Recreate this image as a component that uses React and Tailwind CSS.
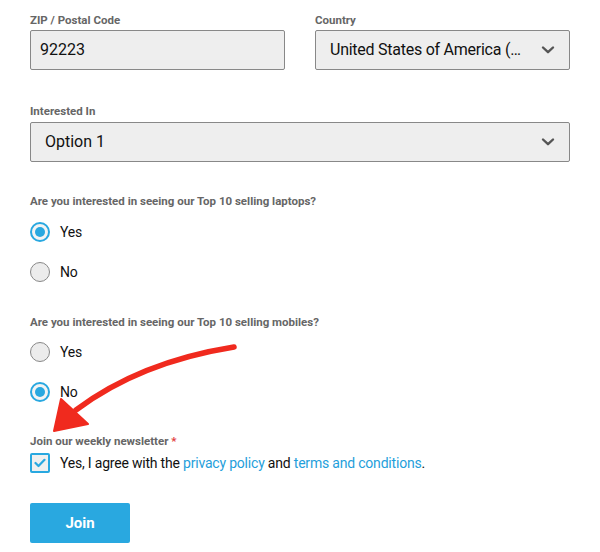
import React from "react";

function Chevron() {
  return (
    <svg width="14" height="10" viewBox="0 0 14 10" className="shrink-0">
      <path d="M2 2.5 L7 7.2 L12 2.5" fill="none" stroke="#555" strokeWidth="2.4" strokeLinecap="round" strokeLinejoin="round" />
    </svg>
  );
}

function Radio({ checked, label }) {
  return (
    <div className="flex items-center h-5">
      {checked ? (
        <span className="w-5 h-5 rounded-full border-2 border-[#29a8e0] bg-[#f4f4f4] flex items-center justify-center">
          <span className="w-[10px] h-[10px] rounded-full bg-[#29a8e0]" />
        </span>
      ) : (
        <span className="w-5 h-5 rounded-full border border-[#888] bg-[#ececec]" />
      )}
      <span className="ml-[10px] text-[14px] tracking-[-0.2px] text-[#111]">{label}</span>
    </div>
  );
}

export default function App() {
  return (
    <div className="relative w-[600px] h-[552px] bg-white overflow-hidden" style={{ fontFamily: "Roboto, 'Liberation Sans', sans-serif" }}>
      <div className="px-[30px] pt-[12px]">
        <div className="flex gap-[30px]">
          <div className="w-[255px]">
            <div className="text-[11.5px] leading-4 font-bold text-[#666]">ZIP / Postal Code</div>
            <div className="mt-[2px] h-10 bg-[#eee] border border-[#888] rounded-[2px] flex items-center pl-[9px] text-[16px] text-[#111]">92223</div>
          </div>
          <div className="w-[255px]">
            <div className="text-[11.5px] leading-4 font-bold text-[#666]">Country</div>
            <div className="mt-[2px] h-10 bg-[#eee] border border-[#888] rounded-[2px] flex items-center pl-[14px] pr-[14px] text-[16px] tracking-[-0.25px] text-[#111]">
              <span className="flex-1 whitespace-nowrap">United States of America (…</span>
              <Chevron />
            </div>
          </div>
        </div>

        <div className="mt-[33px] text-[11.5px] leading-4 font-bold text-[#666]">Interested In</div>
        <div className="mt-[3px] h-10 bg-[#eee] border border-[#888] rounded-[2px] flex items-center pl-[14px] pr-[14px] text-[16px] text-[#111]">
          <span className="flex-1">Option 1</span>
          <Chevron />
        </div>

        <div className="mt-[31px] text-[11.5px] leading-4 font-bold text-[#666]">Are you interested in seeing our Top 10 selling laptops?</div>
        <div className="mt-[13px]"><Radio checked label="Yes" /></div>
        <div className="mt-5"><Radio label="No" /></div>

        <div className="mt-8 text-[11.5px] leading-4 font-bold text-[#666]">Are you interested in seeing our Top 10 selling mobiles?</div>
        <div className="mt-3"><Radio label="Yes" /></div>
        <div className="mt-5"><Radio checked label="No" /></div>

        <div className="mt-[31px] text-[11.5px] leading-4 font-bold text-[#666]">Join our weekly newsletter <span className="text-[#e2403b]">*</span></div>
        <div className="mt-1 flex items-center h-5">
          <span className="w-5 h-5 rounded-[2px] border-2 border-[#29a8e0] bg-[#f0f0f0] flex items-center justify-center">
            <svg width="12" height="10" viewBox="0 0 12 10">
              <path d="M1.5 5 L4.5 8 L10.5 1.8" fill="none" stroke="#29a8e0" strokeWidth="2.2" strokeLinecap="round" strokeLinejoin="round" />
            </svg>
          </span>
          <span className="ml-[10px] text-[14px] tracking-[-0.2px] text-[#111]">
            Yes, I agree with the <span className="text-[#1fa0db]">privacy policy</span> and <span className="text-[#1fa0db]">terms and conditions</span>.
          </span>
        </div>

        <button className="mt-[30px] w-[100px] h-10 bg-[#29a8e0] rounded-[2px] text-white font-bold text-[15px]">Join</button>
      </div>

      <svg className="absolute left-0 top-0 pointer-events-none" width="600" height="552" viewBox="0 0 600 552">
        <path d="M234 347 Q140 362 76 410" fill="none" stroke="#f02a1e" strokeWidth="5.5" strokeLinecap="round" />
        <path d="M54 431 L61 399 L88 424 Z" fill="#f02a1e" stroke="#f02a1e" strokeWidth="2" strokeLinejoin="round" />
      </svg>
    </div>
  );
}
